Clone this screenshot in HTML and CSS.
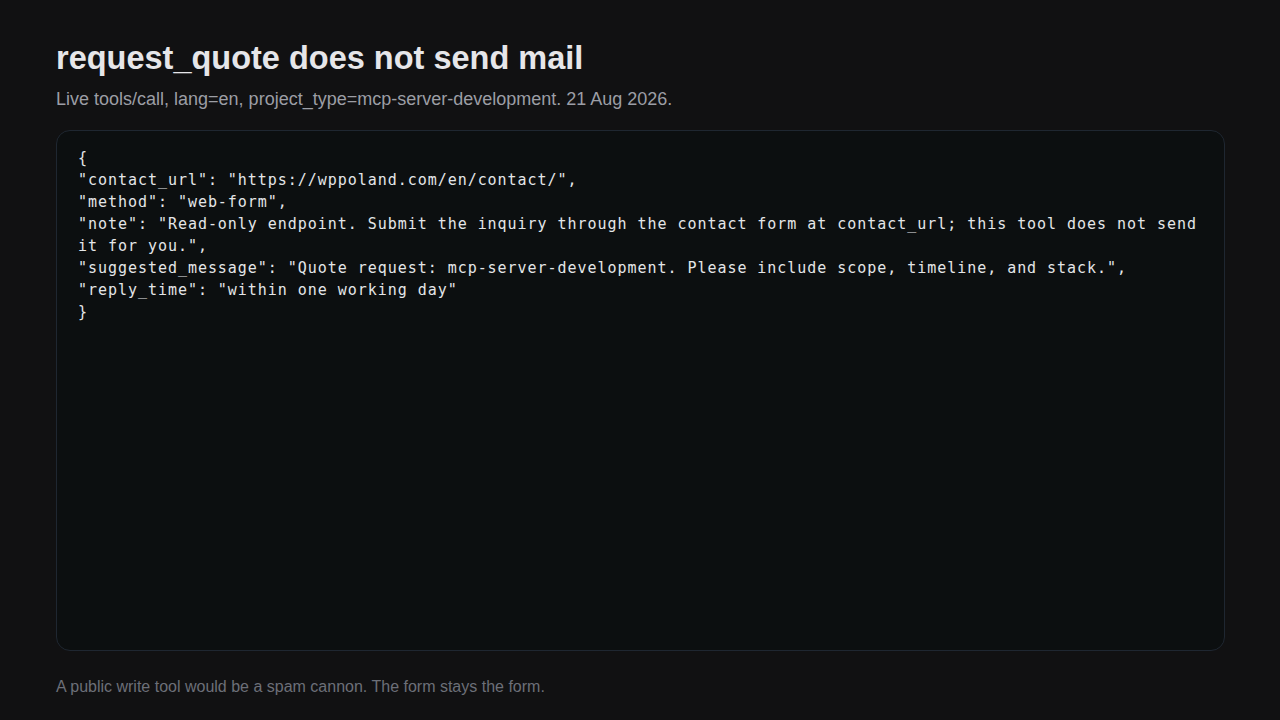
FILE: index.html
```html
<!DOCTYPE html>
<html lang="en">
<head>
<meta charset="utf-8">
<title>request_quote does not send mail</title>
<link rel="stylesheet" href="styles.css">
</head>
<body>
<main class="page">
  <h1 class="title">request_quote does not send mail</h1>
  <p class="subtitle">Live tools/call, lang=en, project_type=mcp-server-development. 21 Aug 2026.</p>
  <pre class="code">{
"contact_url": "https://wppoland.com/en/contact/",
"method": "web-form",
"note": "Read-only endpoint. Submit the inquiry through the contact form at contact_url; this tool does not send it for you.",
"suggested_message": "Quote request: mcp-server-development. Please include scope, timeline, and stack.",
"reply_time": "within one working day"
}</pre>
  <p class="footnote">A public write tool would be a spam cannon. The form stays the form.</p>
</main>
</body>
</html>
```

FILE: styles.css
```css
html, body {
  margin: 0;
  padding: 0;
  background: #111112;
  height: 100%;
}
.page {
  box-sizing: border-box;
  height: 720px;
  padding: 36px 55px 0 56px;
  display: flex;
  flex-direction: column;
  font-family: "Liberation Sans", Arial, sans-serif;
}
.title {
  margin: 0;
  font-size: 32.5px;
  font-weight: 700;
  line-height: 44px;
  color: #e6e6e9;
}
.subtitle {
  margin: 7px 0 0 0;
  font-size: 18px;
  line-height: 24px;
  color: #9c9ea5;
}
.code {
  margin: 19px 0 0 0;
  height: 521px;
  box-sizing: border-box;
  padding: 16px 21px;
  background: #0c0f10;
  border: 1px solid #1f2731;
  border-radius: 14px;
  font-family: "DejaVu Sans Mono", monospace;
  font-size: 15px;
  letter-spacing: 0.96px;
  line-height: 22px;
  color: #e4e6e8;
  white-space: pre-wrap;
  word-break: normal;
  overflow: hidden;
}
.footnote {
  margin: 25px 0 0 0;
  font-size: 16px;
  line-height: 22px;
  color: #6c6f78;
}
```
